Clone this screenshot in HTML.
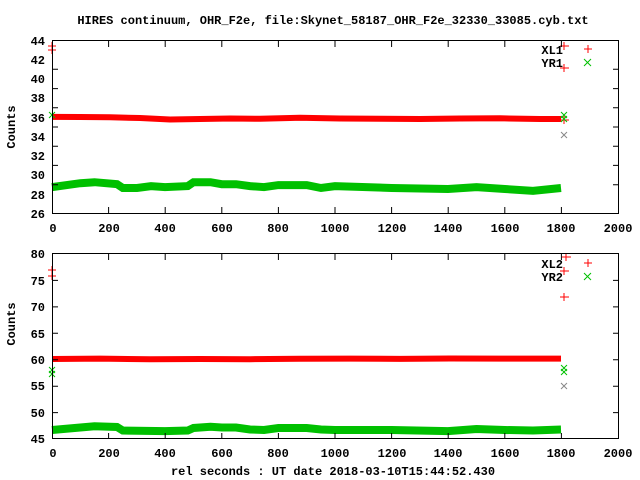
<!DOCTYPE html>
<html><head><style>
html,body{margin:0;padding:0;background:#fff;width:640px;height:480px;overflow:hidden}
svg text{font-family:"Liberation Mono",monospace;font-weight:bold;font-size:12px;fill:#000}
</style></head><body>
<svg width="640" height="480" viewBox="0 0 640 480" xmlns="http://www.w3.org/2000/svg">
<text x="333" y="24" text-anchor="middle">HIRES continuum, OHR_F2e, file:Skynet_58187_OHR_F2e_32330_33085.cyb.txt</text>

<!-- top plot -->
<g fill="none" stroke-linecap="butt">
<polyline points="52,116.9 80,117 110,117.3 140,118 170,119.5 200,119 230,118.5 260,118.8 300,117.8 340,118.5 380,118.8 420,119 460,118.5 500,118.3 540,119 561,119" stroke="#ff0000" stroke-width="6"/>
<polyline points="52,187.1 80.3,183.2 94.5,182.2 117,184.2 122.8,188 137,188 151,186.1 165,187.1 187.8,186.1 193.5,182.2 210.5,182.2 221.8,184.2 236,184.2 250,186.1 264,187.1 278.4,185.1 306.7,185.1 321,188 335,186.1 391.6,188 448,189 476.5,187.1 504.8,189 533,190.9 561,188" stroke="#00c000" stroke-width="8"/>
</g>
<g stroke="#ff0000" stroke-width="1">
<path d="M48,46h8M52,42v8M48,50h8M52,46v8M560,46h9M564,42v8M560,68h9M564,64v8M560,120h9M564,116v8"/>
</g>
<g stroke="#00c000" stroke-width="1">
<path d="M49,112l6,6M55,112l-6,6M561,112l6,6M567,112l-6,6M561,116l6,6M567,116l-6,6"/>
</g>
<path d="M561,132l6,6M567,132l-6,6" stroke="#888" stroke-width="1"/>
<text x="563" y="54" text-anchor="end">XL1</text>
<text x="563" y="67" text-anchor="end">YR1</text>
<path d="M584,49h8M588,45v8" stroke="#ff0000"/>
<path d="M584,59l7,7M591,59l-7,7" stroke="#00c000"/>

<rect x="52.5" y="40.5" width="566" height="173" fill="none" stroke="#000"/>
<g stroke="#000">
<path d="M52,69.3h6M52,88.6h6M52,107.8h6M52,127h6M52,146.2h6M52,165.4h6M52,184.7h6M619,69.3h-6M619,88.6h-6M619,107.8h-6M619,127h-6M619,146.2h-6M619,165.4h-6M619,184.7h-6"/>
<path d="M108.6,213v-6M165.2,213v-6M221.8,213v-6M278.4,213v-6M335,213v-6M391.6,213v-6M448.2,213v-6M504.8,213v-6M561.4,213v-6M108.6,41v6M165.2,41v6M221.8,41v6M278.4,41v6M335,41v6M391.6,41v6M448.2,41v6M504.8,41v6M561.4,41v6"/>
</g>
<g text-anchor="end">
<text x="45" y="45">44</text><text x="45" y="64">42</text><text x="45" y="83">40</text><text x="45" y="102">38</text><text x="45" y="122">36</text><text x="45" y="141">34</text><text x="45" y="160">32</text><text x="45" y="179">30</text><text x="45" y="199">28</text><text x="45" y="218">26</text>
</g>
<g text-anchor="middle">
<text x="53" y="232">0</text><text x="109" y="232">200</text><text x="165" y="232">400</text><text x="222" y="232">600</text><text x="278" y="232">800</text><text x="335" y="232">1000</text><text x="392" y="232">1200</text><text x="448" y="232">1400</text><text x="505" y="232">1600</text><text x="561" y="232">1800</text><text x="618" y="232">2000</text>
</g>
<text transform="translate(15,127) rotate(-90)" text-anchor="middle">Counts</text>

<!-- bottom plot -->
<g fill="none">
<polyline points="52,359 100,358.6 150,359.3 200,359 250,359.2 300,358.8 350,358.6 400,358.9 450,358.5 500,358.6 561,358.6" stroke="#ff0000" stroke-width="6"/>
<polyline points="52,430 80.3,427.5 94.5,426.3 117,427 122.8,430.5 137,430.8 165,431.1 187.8,430.5 193.5,428 210.5,426.8 221.8,427.5 236,427.5 250,429.5 264,430 278.4,428 306.7,428 321,429.5 335,430 391.6,430 448,431.1 476.5,429 504.8,430 533,430.5 561,429.5" stroke="#00c000" stroke-width="8"/>
</g>
<g stroke="#ff0000">
<path d="M48,270h8M52,266v8M48,276h8M52,272v8M562,257h9M566,253v8M560,297h9M564,293v8M560,271h9M564,267v8"/>
</g>
<g stroke="#00c000">
<path d="M49,367l6,6M55,367l-6,6M49,371l6,6M55,371l-6,6M561,365l6,6M567,365l-6,6M561,369l6,6M567,369l-6,6"/>
</g>
<path d="M561,383l6,6M567,383l-6,6" stroke="#888"/>
<text x="563" y="268" text-anchor="end">XL2</text>
<text x="563" y="281" text-anchor="end">YR2</text>
<path d="M584,263h8M588,259v8" stroke="#ff0000"/>
<path d="M584,273l7,7M591,273l-7,7" stroke="#00c000"/>

<rect x="52.5" y="253.5" width="566" height="185" fill="none" stroke="#000"/>
<g stroke="#000">
<path d="M52,280.4h6M52,306.9h6M52,333.3h6M52,359.7h6M52,386.2h6M52,412.6h6M619,280.4h-6M619,306.9h-6M619,333.3h-6M619,359.7h-6M619,386.2h-6M619,412.6h-6"/>
<path d="M108.6,439v-6M165.2,439v-6M221.8,439v-6M278.4,439v-6M335,439v-6M391.6,439v-6M448.2,439v-6M504.8,439v-6M561.4,439v-6M108.6,254v6M165.2,254v6M221.8,254v6M278.4,254v6M335,254v6M391.6,254v6M448.2,254v6M504.8,254v6M561.4,254v6"/>
</g>
<g text-anchor="end">
<text x="45" y="258">80</text><text x="45" y="285">75</text><text x="45" y="311">70</text><text x="45" y="338">65</text><text x="45" y="364">60</text><text x="45" y="390">55</text><text x="45" y="417">50</text><text x="45" y="443">45</text>
</g>
<g text-anchor="middle">
<text x="53" y="457">0</text><text x="109" y="457">200</text><text x="165" y="457">400</text><text x="222" y="457">600</text><text x="278" y="457">800</text><text x="335" y="457">1000</text><text x="392" y="457">1200</text><text x="448" y="457">1400</text><text x="505" y="457">1600</text><text x="561" y="457">1800</text><text x="618" y="457">2000</text>
</g>
<text transform="translate(15,324) rotate(-90)" text-anchor="middle">Counts</text>
<text x="333" y="475" text-anchor="middle">rel seconds : UT date 2018-03-10T15:44:52.430</text>
</svg>
</body></html>
